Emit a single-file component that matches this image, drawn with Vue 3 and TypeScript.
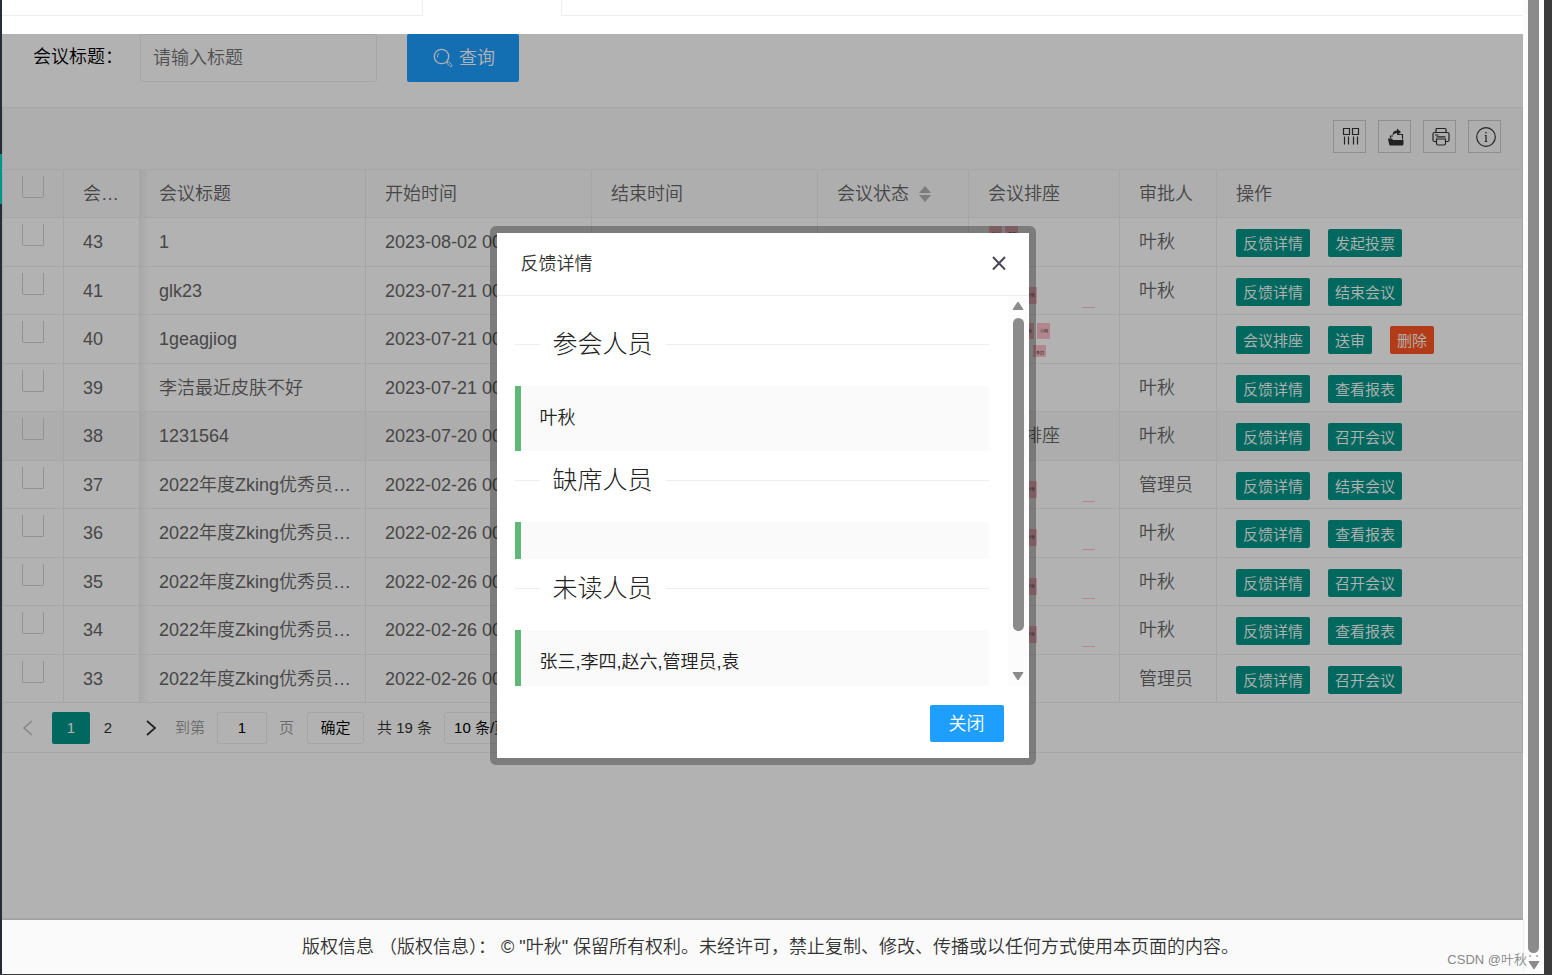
<script setup lang="ts">
import { ref } from 'vue'

interface Seat { x: number; y: number; w: number; h: number; label?: string }
interface Meeting {
  id: number
  title: string
  start: string
  approver: string
  seatText?: string
  seats: Seat[]
  actions: string[]
}

const longTitle = '2022年度Zking优秀员…'
const single: Seat[] = [
  { x: 55, y: 20, w: 13, h: 17, label: '叶秋' },
  { x: 113, y: 40, w: 13, h: 1 },
]

const meetings = ref<Meeting[]>([
  { id: 43, title: '1', start: '2023-08-02 00:00:00', approver: '叶秋', seats: [{ x: 20, y: 8, w: 13, h: 17, label: '叶秋' }, { x: 36, y: 8, w: 13, h: 17, label: '李四' }], actions: ['反馈详情', '发起投票'] },
  { id: 41, title: 'glk23', start: '2023-07-21 00:00:00', approver: '叶秋', seats: single, actions: ['反馈详情', '结束会议'] },
  { id: 40, title: '1geagjiog', start: '2023-07-21 00:00:00', approver: '', seats: [{ x: 52, y: 8, w: 13, h: 16, label: '叶秋' }, { x: 68, y: 8, w: 13, h: 16, label: '小明' }, { x: 64, y: 30, w: 13, h: 12, label: '李四' }], actions: ['会议排座', '送审', '删除'] },
  { id: 39, title: '李洁最近皮肤不好', start: '2023-07-21 00:00:00', approver: '叶秋', seats: [], actions: ['反馈详情', '查看报表'] },
  { id: 38, title: '1231564', start: '2023-07-20 00:00:00', approver: '叶秋', seatText: '会议排座', seats: [], actions: ['反馈详情', '召开会议'] },
  { id: 37, title: longTitle, start: '2022-02-26 00:00:00', approver: '管理员', seats: single, actions: ['反馈详情', '结束会议'] },
  { id: 36, title: longTitle, start: '2022-02-26 00:00:00', approver: '叶秋', seats: single, actions: ['反馈详情', '查看报表'] },
  { id: 35, title: longTitle, start: '2022-02-26 00:00:00', approver: '叶秋', seats: single, actions: ['反馈详情', '召开会议'] },
  { id: 34, title: longTitle, start: '2022-02-26 00:00:00', approver: '叶秋', seats: single, actions: ['反馈详情', '查看报表'] },
  { id: 33, title: longTitle, start: '2022-02-26 00:00:00', approver: '管理员', seats: [], actions: ['反馈详情', '召开会议'] },
])

const groups = [
  { name: '参会人员', people: '叶秋' },
  { name: '缺席人员', people: '' },
  { name: '未读人员', people: '张三,李四,赵六,管理员,袁' },
]

const keyword = ref('')
const pageNo = ref('1')
</script>

<template>
  <div class="screen">
    <aside class="side"><i class="side-mark"></i></aside>
    <div class="main">
      <div class="tabs"><span class="tab tab-first"></span><span class="tab-gap"></span><span class="tab tab-rest"></span></div>
      <section class="frame">
        <form class="search" @submit.prevent>
          <label for="kw">会议标题：</label>
          <input id="kw" v-model="keyword" type="text" placeholder="请输入标题" />
          <button type="submit" class="query">
            <svg width="20" height="20" viewBox="0 0 20 20" fill="none" stroke="currentColor"><circle cx="8.500" cy="8.500" r="7.200" stroke-width="1.300" /><path d="M4.500 9.500A4.300 4.300 0 0 1 6 5.300" stroke-width="1" /><path d="M13.600 13.600l1.200 1.200" stroke-width="1.200" /><path d="M15.600 13.800l3 3a1.100 1.100 0 0 1-1.600 1.600l-3-3z" stroke-width="1" /></svg>
            <span>查询</span>
          </button>
        </form>

        <div class="grid">
          <div class="toolbar">
            <button type="button" aria-label="筛选列">
              <svg width="20" height="20" viewBox="0 0 20 20" fill="none" stroke="currentColor" stroke-width="1.200"><path d="M2.500 1.500h6v6h-6zM11.500 1.500h6v6h-6zM3.500 9.500v8M7.500 9.500v8M12.500 9.500v8M16.500 9.500v8" /></svg>
            </button>
            <button type="button" aria-label="导出">
              <svg width="20" height="20" viewBox="0 0 20 20" fill="currentColor"><path d="M2 11.500h4l1 1.500h10.500v4q0 1.500-1.500 1.500H4.500q-1.200 0-1.500-1.500z" /><path d="M4.500 11V9H7M12 7.500h4.500V12.500" fill="none" stroke="currentColor" stroke-width="1.200" /><path d="M6.500 8.500q0-5 4.500-5V1.500l4 3.500-4 3.200V6q-3 0-4.500 2.500z" /></svg>
            </button>
            <button type="button" aria-label="打印">
              <svg width="20" height="20" viewBox="0 0 20 20" fill="none" stroke="currentColor" stroke-width="1.200"><path d="M5 5.500V2.500q0-1 1-1h8q1 0 1 1V5.500M5 14.500H3.500Q2 14.500 2 13V7Q2 5.500 3.500 5.500h13Q18 5.500 18 7v6q0 1.500-1.500 1.500H15M4 8h3.500M5.500 9.800h9" /><path d="M5.500 12h9v4.500q0 1.500-1.500 1.500H7q-1.500 0-1.500-1.500z" /></svg>
            </button>
            <button type="button" aria-label="提示">
              <svg width="22" height="22" viewBox="0 0 22 22" fill="none" stroke="currentColor" stroke-width="1.200"><circle cx="11" cy="11" r="9.300" /><path d="M9.800 9.500H11v6M9.800 15.500h2.400M11 6v1.600" /></svg>
            </button>
          </div>

          <table>
            <colgroup><col class="c-check" /><col class="c-id" /><col class="c-text" /><col class="c-date" /><col class="c-date" /><col class="c-mid" /><col class="c-mid" /><col class="c-appr" /><col /></colgroup>
            <thead>
              <tr>
                <th class="check"><input type="checkbox" aria-label="全选" /></th>
                <th>会…</th>
                <th class="edge">会议标题</th>
                <th>开始时间</th>
                <th>结束时间</th>
                <th><span class="sortable">会议状态<svg width="12" height="16" viewBox="0 0 12 16"><path d="M6 0l6 7H0zM0 9h12l-6 7z" fill="#b2b2b2" /></svg></span></th>
                <th>会议排座</th>
                <th>审批人</th>
                <th>操作</th>
              </tr>
            </thead>
            <tbody>
              <tr v-for="m in meetings" :key="m.id" :class="{ hovered: m.id === 38 }">
                <td class="check"><input type="checkbox" :aria-label="'选择 ' + m.id" /></td>
                <td>{{ m.id }}</td>
                <td class="edge">{{ m.title }}</td>
                <td>{{ m.start }}</td>
                <td></td>
                <td></td>
                <td class="seat">
                  {{ m.seatText }}
                  <svg v-if="m.seats.length" width="150" height="48" viewBox="0 0 150 48">
                    <g v-for="(s, i) in m.seats" :key="i">
                      <rect :x="s.x" :y="s.y" :width="s.w" :height="s.h" fill="#ffc0cb" />
                      <text v-if="s.label" :x="s.x + 3" :y="s.y + 10" font-size="4" fill="#333">{{ s.label }}</text>
                    </g>
                  </svg>
                </td>
                <td>{{ m.approver }}</td>
                <td>
                  <div class="actions"><button v-for="a in m.actions" :key="a" type="button" :class="{ danger: a === '删除' }">{{ a }}</button></div>
                </td>
              </tr>
            </tbody>
          </table>

          <nav class="pager">
            <button type="button" class="arrow" disabled aria-label="上一页"><svg width="12" height="18" viewBox="0 0 12 18" fill="none" stroke="currentColor" stroke-width="1.600"><path d="M10 2L2 9l8 7" /></svg></button>
            <button type="button" class="num current">1</button>
            <button type="button" class="num">2</button>
            <button type="button" class="arrow next" aria-label="下一页"><svg width="12" height="18" viewBox="0 0 12 18" fill="none" stroke="currentColor" stroke-width="1.800"><path d="M2 2l8 7-8 7" /></svg></button>
            <label for="pg">到第</label>
            <input id="pg" v-model="pageNo" type="text" />
            <span class="muted">页</span>
            <button type="button" class="box ok">确定</button>
            <span class="total">共 19 条</span>
            <select class="box size" aria-label="每页条数"><option>10 条/页</option></select>
          </nav>
        </div>

        <div class="shade"></div>
        <div class="modal" role="dialog" aria-labelledby="dlg">
          <header>
            <h2 id="dlg">反馈详情</h2>
            <button type="button" aria-label="关闭窗口"><svg width="16" height="16" viewBox="0 0 16 16" fill="none" stroke="#4a4955" stroke-width="2"><path d="M2 1l12 12.500M14 1L2 13.500" /></svg></button>
          </header>
          <div class="body">
            <div class="content">
              <section v-for="g in groups" :key="g.name">
                <h3>{{ g.name }}</h3>
                <blockquote>{{ g.people }}</blockquote>
              </section>
            </div>
            <div class="bar">
              <svg width="12" height="10" viewBox="0 0 12 10"><path d="M6 1L11 8.500H1z" fill="#8b8b8b" stroke="#8b8b8b" stroke-linejoin="round" /></svg>
              <i class="thumb"></i>
              <svg width="12" height="10" viewBox="0 0 12 10"><path d="M6 9L1 1.500h10z" fill="#8b8b8b" stroke="#8b8b8b" stroke-linejoin="round" /></svg>
            </div>
          </div>
          <footer><button type="button">关闭</button></footer>
        </div>
      </section>
      <footer class="copyright">版权信息 （版权信息）： © "叶秋" 保留所有权利。未经许可，禁止复制、修改、传播或以任何方式使用本页面的内容。</footer>
    </div>
    <div class="page-bar">
      <i class="page-thumb"></i>
      <svg width="12" height="10" viewBox="0 0 12 10"><path d="M6 9L1 1.500h10z" fill="#8b8b8b" stroke="#8b8b8b" stroke-linejoin="round" /></svg>
    </div>
    <div class="rim"></div>
    <span class="watermark">CSDN @叶秋∵</span>
  </div>
</template>

<style>
body { margin: 0; overflow: hidden; }
</style>

<style scoped>
.screen {
  position: relative;
  display: grid;
  grid-template-columns: 2px 1fr 21px 8px;
  height: 100vh;
  box-sizing: border-box;
  border-bottom: 1px solid #3b3b3b;
  font-family: "Liberation Sans", "Noto Sans CJK SC", sans-serif;
  font-size: 18px;
  font-weight: 350;
  line-height: 28px;
  color: #333;
  overflow: hidden;
}
.screen *, .screen *::before { box-sizing: border-box; }
button, input, select { font: inherit; color: inherit; margin: 0; padding: 0; border: 0; background: none; }
svg { display: block; flex: none; }

.side { background: #282b3b; padding-top: 154px; }
.side-mark { display: block; height: 50px; background: #009688; }
.rim { background: #3b3b3b; }

.main { display: flex; flex-direction: column; min-width: 0; background: #fff; }
.tabs { display: flex; height: 34px; flex: none; }
.tab { height: 16px; border-bottom: 1px solid #eee; }
.tab-first { width: 421px; border-right: 1px solid #eee; }
.tab-gap { width: 138px; }
.tab-rest { flex: 1; border-left: 1px solid #eee; }

.frame { position: relative; flex: 1; min-height: 0; background: #fff; }
.shade { position: absolute; inset: 0; background: rgba(0, 0, 0, 0.3); }

.search { display: flex; height: 73px; padding-left: 31px; align-items: flex-start; color: #000; }
.search label { width: 107px; line-height: 46px; }
.search input { width: 237px; height: 48px; padding: 0 12px; border: 1px solid #eee; border-radius: 2px; }
.search input::placeholder { color: #757575; opacity: 1; }
.query { display: flex; align-items: center; justify-content: center; gap: 6px; width: 112px; height: 48px; margin-left: 30px; padding-left: 2px; border-radius: 2px; background: #1e9fff; color: #fff; }

.grid { border: 1px solid #eee; }
.toolbar { display: flex; justify-content: flex-end; gap: 12px; height: 62px; padding: 12px 21px 0 0; background: #fafafa; border-bottom: 1px solid #eee; }
.toolbar button { display: grid; place-items: center; width: 33px; height: 33px; padding-left: 2px; border: 1px solid #ccc; color: #333; }

table { width: 100%; table-layout: fixed; border-spacing: 0; color: #666; }
.c-check { width: 61px; }
.c-id { width: 76px; }
.c-text { width: 226px; }
.c-date { width: 226px; }
.c-mid { width: 151px; }
.c-appr { width: 97px; }
th, td { position: relative; height: 48px; padding: 0 0 0 19px; border-right: 1px solid #eee; border-bottom: 1px solid #eee; text-align: left; font-weight: 350; white-space: nowrap; overflow: hidden; }
th:last-child, td:last-child { border-right: 0; }
thead { background: #fafafa; }
tbody tr:nth-child(odd) td { height: 49px; }
.hovered { background: #f8f8f8; }
.edge { background-image: linear-gradient(to right, rgba(0, 0, 0, 0.05), transparent 9px); }
.check { vertical-align: top; padding-top: 6px; }
.check input { display: block; appearance: none; width: 22px; height: 22px; border: 1px solid #d2d2d2; border-top: 0; border-radius: 0 0 2px 2px; }
.sortable { display: flex; align-items: center; gap: 10px; }
.seat svg { position: absolute; left: 0; top: 0; }
.actions { display: flex; gap: 18px; padding-top: 2px; }
.actions button { height: 28px; padding: 1px 7px 0; border-radius: 2px; background: #009688; color: #fff; font-size: 15px; line-height: 27px; }
.actions .danger { background: #ff5722; }

.pager { display: flex; align-items: center; height: 49px; font-size: 15px; color: #333; padding-left: 19px; }
.pager .arrow { display: grid; place-items: center; width: 12px; }
.pager .arrow:disabled { color: #c2c2c2; }
.num { width: 36px; height: 32px; border-radius: 2px; }
.pager .current { width: 38px; margin-left: 18px; background: #009688; color: #fff; }
.pager .next { margin: 0 18px 0 19px; }
.pager label, .muted { color: #999; }
.pager input { width: 50px; height: 32px; margin: 0 12px; border: 1px solid #eee; border-radius: 2px; text-align: center; color: #000; }
.box { height: 32px; border: 1px solid #eee; border-radius: 2px; color: #000; }
.ok { width: 57px; margin: 0 13px; }
.size { width: 100px; margin-left: 12px; padding: 0 9px; appearance: none; }

.modal { position: absolute; left: 50%; top: 192px; width: 546px; margin-left: -273px; border: 7px solid rgba(0, 0, 0, 0.3); border-radius: 6px; background: #fff; background-clip: padding-box; }
.modal header { display: flex; align-items: center; justify-content: space-between; height: 63px; padding: 0 22px 0 24px; border-bottom: 1px solid #eee; }
.modal h2 { margin: 0; font-size: 18px; font-weight: 350; }
.body { display: flex; height: 390px; overflow: hidden; }
.content { flex: 1; padding: 31px 19px 0 18px; color: #222; }
.content section { margin-bottom: 12px; }
h3 { display: flex; align-items: center; gap: 13px; margin: 0 0 25px; font-size: 25px; line-height: 34px; font-weight: 300; }
h3::before, h3::after { content: ""; height: 1px; background: #eee; flex: 1; }
h3::before { flex: none; width: 25px; }
blockquote { margin: 0; min-height: 37px; padding: 18px 19px; border-left: 6px solid #5fb878; border-radius: 0 2px 2px 0; background: #fafafa; line-height: 29px; }
.bar { display: flex; flex-direction: column; align-items: center; width: 21px; padding: 5px 0; background: #fcfcfc; }
.thumb { width: 11px; height: 313px; margin: 7px 0 auto; border-radius: 6px; background: #8b8b8b; }
.modal footer { display: flex; justify-content: flex-end; height: 72px; padding: 19px 25px 0 0; }
.modal footer button { width: 74px; height: 37px; border-radius: 2px; background: #1e9fff; color: #fff; }

.copyright { flex: none; height: 54px; padding-left: 300px; background: #fafafa; line-height: 54px; white-space: nowrap; box-shadow: 0 -1px 2px rgba(0, 0, 0, 0.15); z-index: 1; }
.page-bar { display: flex; flex-direction: column; align-items: center; background: #fcfcfc; padding-bottom: 4px; gap: 7px; }
.page-thumb { flex: 1; width: 11px; border-radius: 0 0 6px 6px; background: #8b8b8b; }
.watermark { position: absolute; z-index: 2; right: 12px; bottom: 0; font-size: 13px; line-height: 28px; white-space: nowrap; color: #888; }
</style>
